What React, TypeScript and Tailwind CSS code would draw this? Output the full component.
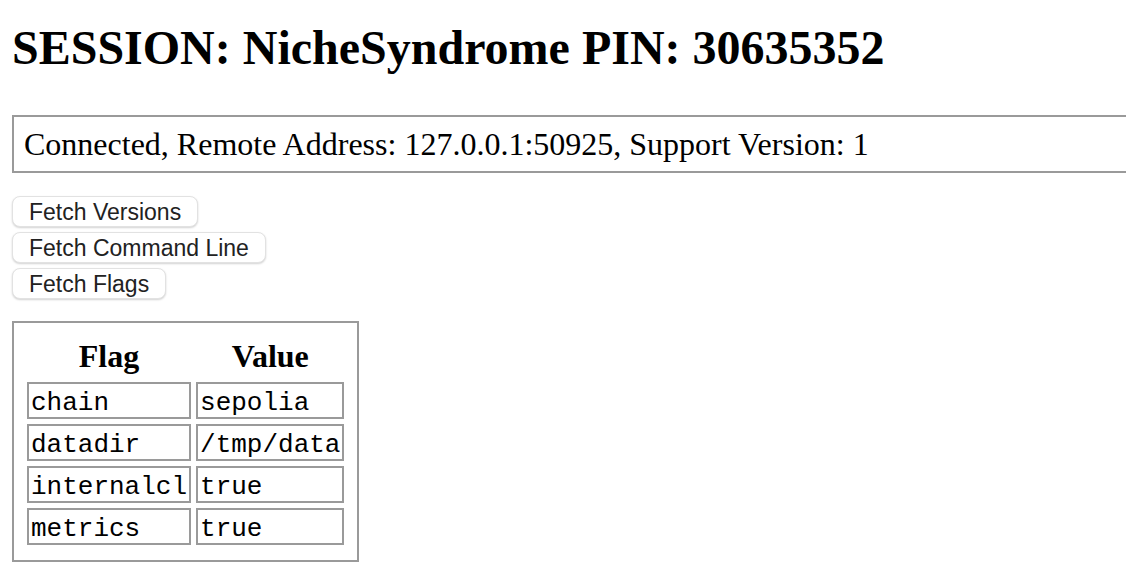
export default function App() {
  const flags = [
    ['chain', 'sepolia'],
    ['datadir', '/tmp/data'],
    ['internalcl', 'true'],
    ['metrics', 'true'],
  ];

  return (
    <div className="min-h-screen bg-white pl-3 pt-[20px] text-black [font-family:'Liberation_Serif',serif]">
      <h1 className="text-[48px] font-bold leading-[56px] whitespace-nowrap">
        SESSION: NicheSyndrome PIN: 30635352
      </h1>

      <div className="mt-[39px] w-[1130px] border-2 border-[#9a9a9a] px-[10px] py-[8px] text-[32px] leading-[38px] whitespace-nowrap">
        Connected, Remote Address: 127.0.0.1:50925, Support Version: 1
      </div>

      <div className="mt-[23px] flex flex-col items-start gap-[5px] [font-family:'Liberation_Sans',Arial,sans-serif]">
        {['Fetch Versions', 'Fetch Command Line', 'Fetch Flags'].map((label) => (
          <button
            key={label}
            className="h-[31px] rounded-[8px] border border-[#e2e2e2] bg-white px-[16px] pt-[2px] text-[23px] leading-none text-[#222] shadow-[0_1px_2px_rgba(0,0,0,0.18)]"
          >
            {label}
          </button>
        ))}
      </div>

      <table className="mt-[22px] border-separate border-2 border-[#9a9a9a] [border-spacing:5px] px-[8px] pt-[9px] pb-[10px]">
        <thead>
          <tr>
            <th className="text-[32px] font-bold leading-[38px] pb-[2px]">Flag</th>
            <th className="text-[32px] font-bold leading-[38px] pb-[2px]">Value</th>
          </tr>
        </thead>
        <tbody className="[font-family:'Liberation_Mono',monospace]">
          {flags.map(([k, v]) => (
            <tr key={k}>
              <td className="h-[37px] border-2 border-[#9a9a9a] px-[2px] pt-[4px] text-[26px] leading-[28px]">{k}</td>
              <td className="h-[37px] border-2 border-[#9a9a9a] px-[2px] pt-[4px] text-[26px] leading-[28px]">{v}</td>
            </tr>
          ))}
        </tbody>
      </table>
    </div>
  );
}
